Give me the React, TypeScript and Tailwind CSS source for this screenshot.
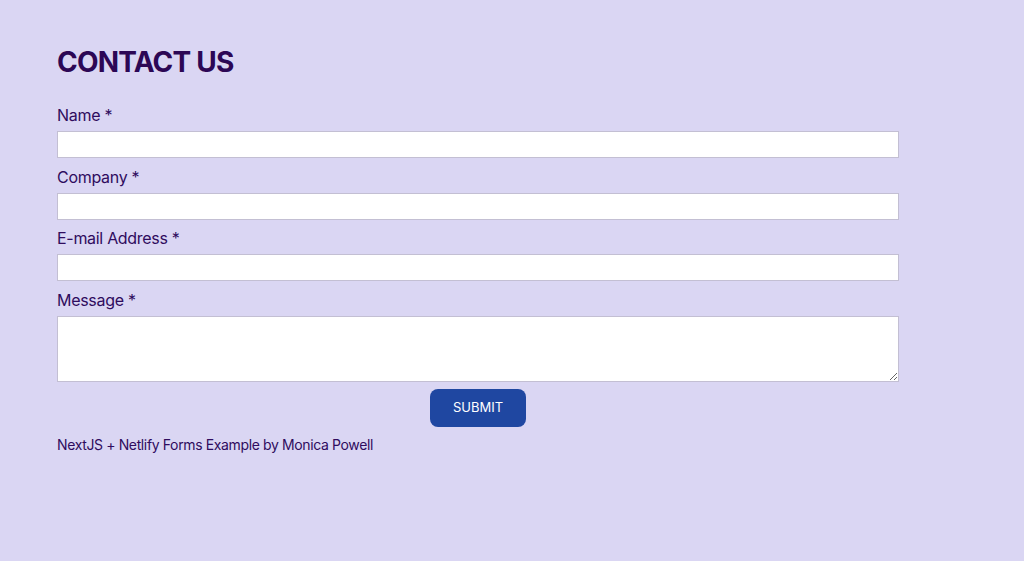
import React from "react";

const Field = ({ label, area }: { label: string; area?: boolean }) => (
  <div className="flex flex-col">
    <label className="text-[16px] leading-[24px] tracking-[-0.3px] text-[#2f0c5e]">{label}</label>
    {area ? (
      <textarea className="mt-[4px] h-[66px] w-full resize-y border border-[#c3bfd3] bg-white outline-none block" />
    ) : (
      <input className="mt-[4px] h-[27px] w-full border border-[#c3bfd3] bg-white outline-none" />
    )}
  </div>
);

export default function App() {
  return (
    <div
      className="min-h-[561px] w-full bg-[#dad6f3] text-[#2f0c5e]"
      style={{ fontFamily: "Inter, 'Noto Sans', sans-serif" }}
    >
      <div className="pl-[57px] pt-[45px] w-[899px]">
        <h1 className="text-[28px] leading-[34px] font-bold tracking-[-0.8px] text-[#2c0755]">CONTACT US</h1>
        <form className="mt-[24px] flex flex-col gap-[6.5px]">
          <Field label="Name *" />
          <Field label="Company *" />
          <Field label="E-mail Address *" />
          <Field label="Message *" area />
          <div className="flex justify-center mt-[1px]">
            <button
              type="button"
              className="h-[38px] w-[96px] rounded-[8px] bg-[#1f47a1] text-[13px] text-white"
            >
              SUBMIT
            </button>
          </div>
        </form>
        <p className="mt-[8px] text-[14px] leading-[20px] tracking-[-0.37px] text-[#2f0c5e]">
          NextJS + Netlify Forms Example by Monica Powell
        </p>
      </div>
    </div>
  );
}
